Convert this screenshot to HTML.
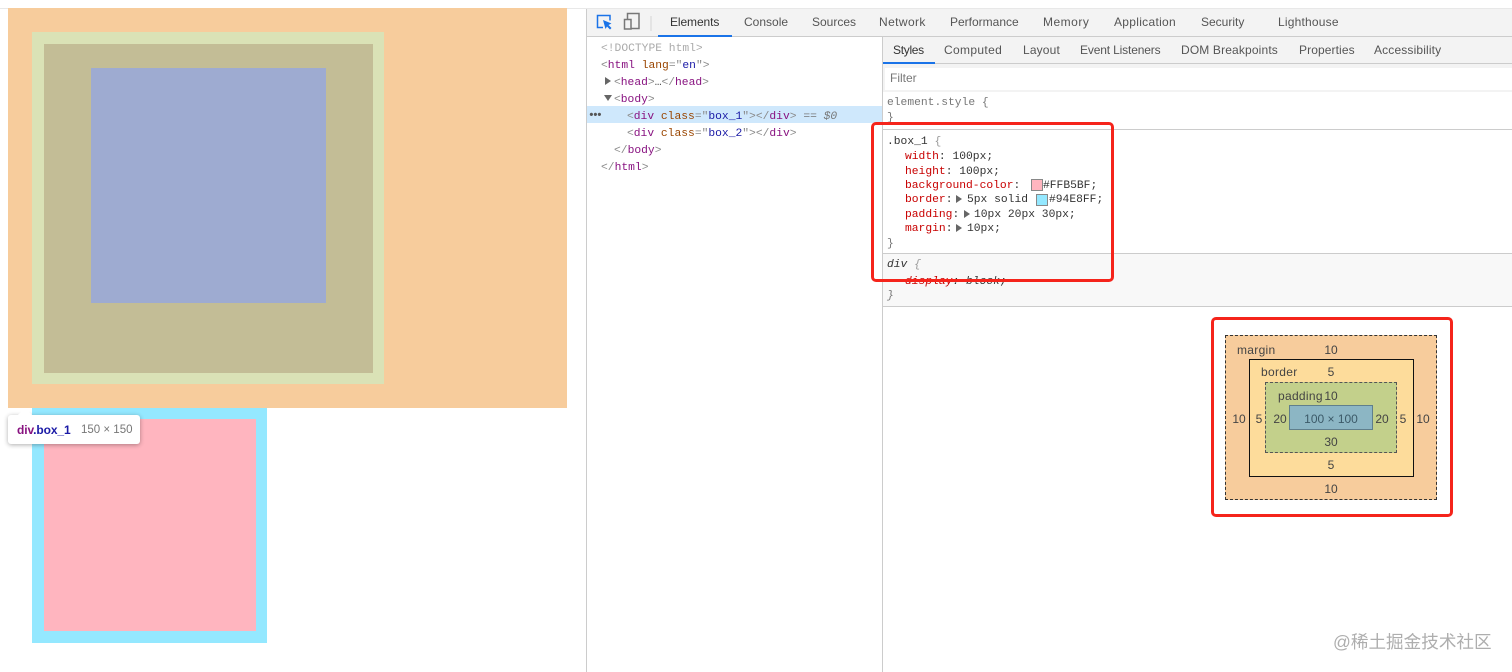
<!DOCTYPE html>
<html lang="zh"><head><meta charset="utf-8"><title>box model</title>
<style>
html,body{margin:0;padding:0;background:#fff;}
body{width:1512px;height:672px;position:relative;overflow:hidden;font-family:"Liberation Sans","Noto Sans CJK SC",sans-serif;color:#444;}
.a{position:absolute;}
.t{position:absolute;white-space:pre;font-size:12px;line-height:14px;color:#555;}
.m{position:absolute;white-space:pre;font-family:"Liberation Mono",monospace;font-size:11.3px;line-height:14px;color:#444;margin-top:1px;}
.tag{color:#881280}.at{color:#994500}.v{color:#1a1aa6}.g{color:#999}.gr{color:#8a8a8a}
.p{color:#c80000}
.tri{position:absolute;width:0;height:0;border-top:4px solid transparent;border-bottom:4px solid transparent;border-left:6px solid #666;}
.sw{position:absolute;width:10px;height:10px;border:1px solid #888;}
.n{position:absolute;font-size:12px;line-height:14px;color:#444;white-space:pre;transform:translateX(-50%);}
.n2{position:absolute;font-size:12px;line-height:14px;color:#444;white-space:pre;letter-spacing:.3px;}
</style></head><body>
<div class="a" style="left:0;top:8px;width:1512px;height:1px;background:#e8e8e8"></div>
<!-- page viewport -->
<div class="a" style="left:8px;top:8px;width:559px;height:400px;background:#f7cc9c"></div>
<div class="a" style="left:32px;top:32px;width:352px;height:352px;background:#dae2b6"></div>
<div class="a" style="left:44px;top:44px;width:329px;height:329px;background:#c3bd96"></div>
<div class="a" style="left:91px;top:68px;width:235px;height:235px;background:#9eabd1"></div>
<div class="a" style="left:32px;top:408px;width:235px;height:235px;background:#94e8ff"></div>
<div class="a" style="left:44px;top:419px;width:212px;height:212px;background:#ffb5bf"></div>
<!-- tooltip -->
<div class="a" style="left:8px;top:415px;width:132px;height:29px;background:#fff;border-radius:3px;box-shadow:0 1px 5px rgba(0,0,0,.32)"></div>
<div class="a" style="left:20px;top:410px;width:10px;height:10px;background:#fff;transform:rotate(45deg);"></div>
<div class="t" style="left:17px;top:423px;font-weight:bold;color:#881280;letter-spacing:-.1px">div<span style="color:#1a1aa6">.box_1</span></div>
<div class="t" style="left:81px;top:423px;color:#777;font-size:11.5px">150 × 150</div>
<!-- devtools frame -->
<div class="a" style="left:586px;top:9px;width:1px;height:663px;background:#ccc"></div>
<div class="a" style="left:587px;top:9px;width:925px;height:27px;background:#f3f3f3"></div>
<div class="a" style="left:587px;top:36px;width:925px;height:1px;background:#ccc"></div>
<div class="a" style="left:882px;top:37px;width:1px;height:635px;background:#ccc"></div>
<!-- toolbar icons -->
<svg class="a" style="left:590px;top:8px" width="70" height="30" viewBox="0 0 70 30" fill="none">
<path d="M13 19.500H7.500V7.500H20V12.500" stroke="#1a73e8" stroke-width="1.500"/>
<path d="M13 12L21.500 15.500L18.500 17L21.500 20L20 21.500L17 18.500L15.500 21Z" fill="#1a73e8"/>
<path d="M37.500 11V5.500H49V20.500H41.500" stroke="#777" stroke-width="1.500"/>
<rect x="34.500" y="11.500" width="6.500" height="9.500" stroke="#777" stroke-width="1.500"/>
<path d="M61 8V23" stroke="#d6d6d6"/>
</svg>
<!-- main tabs -->
<div class="t" style="left:670px;top:15px;color:#333;letter-spacing:-.1px">Elements</div>
<div class="a" style="left:658px;top:35px;width:74px;height:2px;background:#1a73e8"></div>
<div class="t" style="left:744px;top:15px">Console</div>
<div class="t" style="left:812px;top:15px">Sources</div>
<div class="t" style="left:879px;top:15px;letter-spacing:.4px">Network</div>
<div class="t" style="left:950px;top:15px">Performance</div>
<div class="t" style="left:1043px;top:15px;letter-spacing:.5px">Memory</div>
<div class="t" style="left:1114px;top:15px;letter-spacing:.3px">Application</div>
<div class="t" style="left:1201px;top:15px">Security</div>
<div class="t" style="left:1278px;top:15px;letter-spacing:.2px">Lighthouse</div>
<!-- elements tree -->
<div class="a" style="left:587px;top:106px;width:295px;height:17px;background:#cfe8fc"></div>
<div class="m g" style="left:601px;top:41px;color:#aaa">&lt;!DOCTYPE html&gt;</div>
<div class="m" style="left:601px;top:58px"><span class="gr">&lt;</span><span class="tag">html</span> <span class="at">lang</span><span class="gr">="</span><span class="v">en</span><span class="gr">"&gt;</span></div>
<div class="tri" style="left:605px;top:77px"></div>
<div class="m" style="left:614px;top:75px"><span class="gr">&lt;</span><span class="tag">head</span><span class="gr">&gt;</span>…<span class="gr">&lt;/</span><span class="tag">head</span><span class="gr">&gt;</span></div>
<div class="a" style="left:604px;top:95px;width:0;height:0;border-left:4px solid transparent;border-right:4px solid transparent;border-top:6px solid #666"></div>
<div class="m" style="left:614px;top:92px"><span class="gr">&lt;</span><span class="tag">body</span><span class="gr">&gt;</span></div>
<div class="m" style="left:588px;top:108px;color:#555;font-weight:bold;letter-spacing:-2.8px">•••</div>
<div class="m" style="left:627px;top:109px"><span class="gr">&lt;</span><span class="tag">div</span> <span class="at">class</span><span class="gr">="</span><span class="v">box_1</span><span class="gr">"&gt;&lt;/</span><span class="tag">div</span><span class="gr">&gt;</span> <span style="color:#777;font-style:italic">== $0</span></div>
<div class="m" style="left:627px;top:126px"><span class="gr">&lt;</span><span class="tag">div</span> <span class="at">class</span><span class="gr">="</span><span class="v">box_2</span><span class="gr">"&gt;&lt;/</span><span class="tag">div</span><span class="gr">&gt;</span></div>
<div class="m" style="left:614px;top:143px"><span class="gr">&lt;/</span><span class="tag">body</span><span class="gr">&gt;</span></div>
<div class="m" style="left:601px;top:160px"><span class="gr">&lt;/</span><span class="tag">html</span><span class="gr">&gt;</span></div>
<!-- styles tabs -->
<div class="a" style="left:883px;top:37px;width:629px;height:27px;background:#f3f3f3"></div>
<div class="a" style="left:883px;top:63px;width:629px;height:1px;background:#ccc"></div>
<div class="a" style="left:883px;top:62px;width:52px;height:2px;background:#1a73e8"></div>
<div class="t" style="left:893px;top:43px;color:#333;letter-spacing:-.3px">Styles</div>
<div class="t" style="left:944px;top:43px;letter-spacing:.35px">Computed</div>
<div class="t" style="left:1023px;top:43px;letter-spacing:.15px">Layout</div>
<div class="t" style="left:1080px;top:43px;letter-spacing:-.15px">Event Listeners</div>
<div class="t" style="left:1181px;top:43px;letter-spacing:.15px">DOM Breakpoints</div>
<div class="t" style="left:1299px;top:43px;letter-spacing:.1px">Properties</div>
<div class="t" style="left:1374px;top:43px;letter-spacing:.15px">Accessibility</div>
<!-- filter -->
<div class="a" style="left:883px;top:64px;width:629px;height:28px;background:#f3f3f3"></div>
<div class="a" style="left:885px;top:68px;width:627px;height:22px;background:#fff"></div>
<div class="t" style="left:890px;top:71px;color:#777">Filter</div>
<!-- rules -->
<div class="m" style="left:887px;top:95px;color:#777">element.style {</div>
<div class="m" style="left:887px;top:110px;color:#777">}</div>
<div class="a" style="left:883px;top:129px;width:629px;height:1px;background:#ccc"></div>
<div class="m" style="left:887px;top:134px;color:#333">.box_1 <span class="g">{</span></div>
<div class="m" style="left:905px;top:149px;color:#333"><span class="p">width</span>: 100px;</div>
<div class="m" style="left:905px;top:164px;color:#333"><span class="p">height</span>: 100px;</div>
<div class="m" style="left:905px;top:178px;color:#333"><span class="p">background-color</span>:</div>
<div class="sw" style="left:1031px;top:179px;background:#ffb5bf"></div>
<div class="m" style="left:1043px;top:178px;color:#333">#FFB5BF;</div>
<div class="m" style="left:905px;top:192px;color:#333"><span class="p">border</span>:</div>
<div class="tri" style="left:956px;top:195px"></div>
<div class="m" style="left:967px;top:192px;color:#333">5px solid</div>
<div class="sw" style="left:1036px;top:194px;background:#94e8ff"></div>
<div class="m" style="left:1049px;top:192px;color:#333">#94E8FF;</div>
<div class="m" style="left:905px;top:207px;color:#333"><span class="p">padding</span>:</div>
<div class="tri" style="left:964px;top:210px"></div>
<div class="m" style="left:974px;top:207px;color:#333">10px 20px 30px;</div>
<div class="m" style="left:905px;top:221px;color:#333"><span class="p">margin</span>:</div>
<div class="tri" style="left:956px;top:224px"></div>
<div class="m" style="left:967px;top:221px;color:#333">10px;</div>
<div class="m" style="left:887px;top:236px;color:#777">}</div>
<div class="a" style="left:883px;top:254px;width:629px;height:52px;background:#f8f8f8"></div>
<div class="a" style="left:883px;top:253px;width:629px;height:1px;background:#ccc"></div>
<div class="a" style="left:883px;top:306px;width:629px;height:1px;background:#ccc"></div>
<div class="m" style="left:887px;top:257px;color:#333;font-style:italic">div <span class="g">{</span></div>
<div class="m" style="left:905px;top:274px;color:#333;font-style:italic"><span class="p">display</span>: block;</div>
<div class="m" style="left:887px;top:288px;color:#777;font-style:italic">}</div>
<!-- red box 1 -->
<div class="a" style="left:871px;top:122px;width:243px;height:160px;box-sizing:border-box;border:3px solid #f5241b;border-radius:5px"></div>
<!-- box model -->
<div class="a" style="left:1225px;top:335px;width:212px;height:165px;box-sizing:border-box;border:1px dashed #333;background:#f7cc9c"></div>
<div class="a" style="left:1249px;top:359px;width:165px;height:118px;box-sizing:border-box;border:1px solid #111;background:#fddc9b"></div>
<div class="a" style="left:1265px;top:382px;width:132px;height:71px;box-sizing:border-box;border:1px dashed #555;background:#c3d08b"></div>
<div class="a" style="left:1289px;top:405px;width:84px;height:25px;box-sizing:border-box;border:1px solid #5f7f8c;background:#8cb6c4"></div>
<div class="n2" style="left:1237px;top:343px">margin</div>
<div class="n" style="left:1331px;top:343px">10</div>
<div class="n2" style="left:1261px;top:365px">border</div>
<div class="n" style="left:1331px;top:365px">5</div>
<div class="n2" style="left:1278px;top:389px">padding</div>
<div class="n" style="left:1331px;top:389px">10</div>
<div class="n" style="left:1331px;top:412px;color:#3c5a68">100 × 100</div>
<div class="n" style="left:1239px;top:412px">10</div>
<div class="n" style="left:1259px;top:412px">5</div>
<div class="n" style="left:1280px;top:412px">20</div>
<div class="n" style="left:1382px;top:412px">20</div>
<div class="n" style="left:1403px;top:412px">5</div>
<div class="n" style="left:1423px;top:412px">10</div>
<div class="n" style="left:1331px;top:435px">30</div>
<div class="n" style="left:1331px;top:458px">5</div>
<div class="n" style="left:1331px;top:482px">10</div>
<!-- red box 2 -->
<div class="a" style="left:1211px;top:317px;width:242px;height:200px;box-sizing:border-box;border:3px solid #f5241b;border-radius:5px"></div>
<!-- watermark -->
<div class="a" style="left:1333px;top:632px;white-space:pre;font-size:17.6px;line-height:20px;color:#aeaeae;font-family:'Liberation Sans','Noto Sans CJK SC',sans-serif">@稀土掘金技术社区</div>
</body></html>
